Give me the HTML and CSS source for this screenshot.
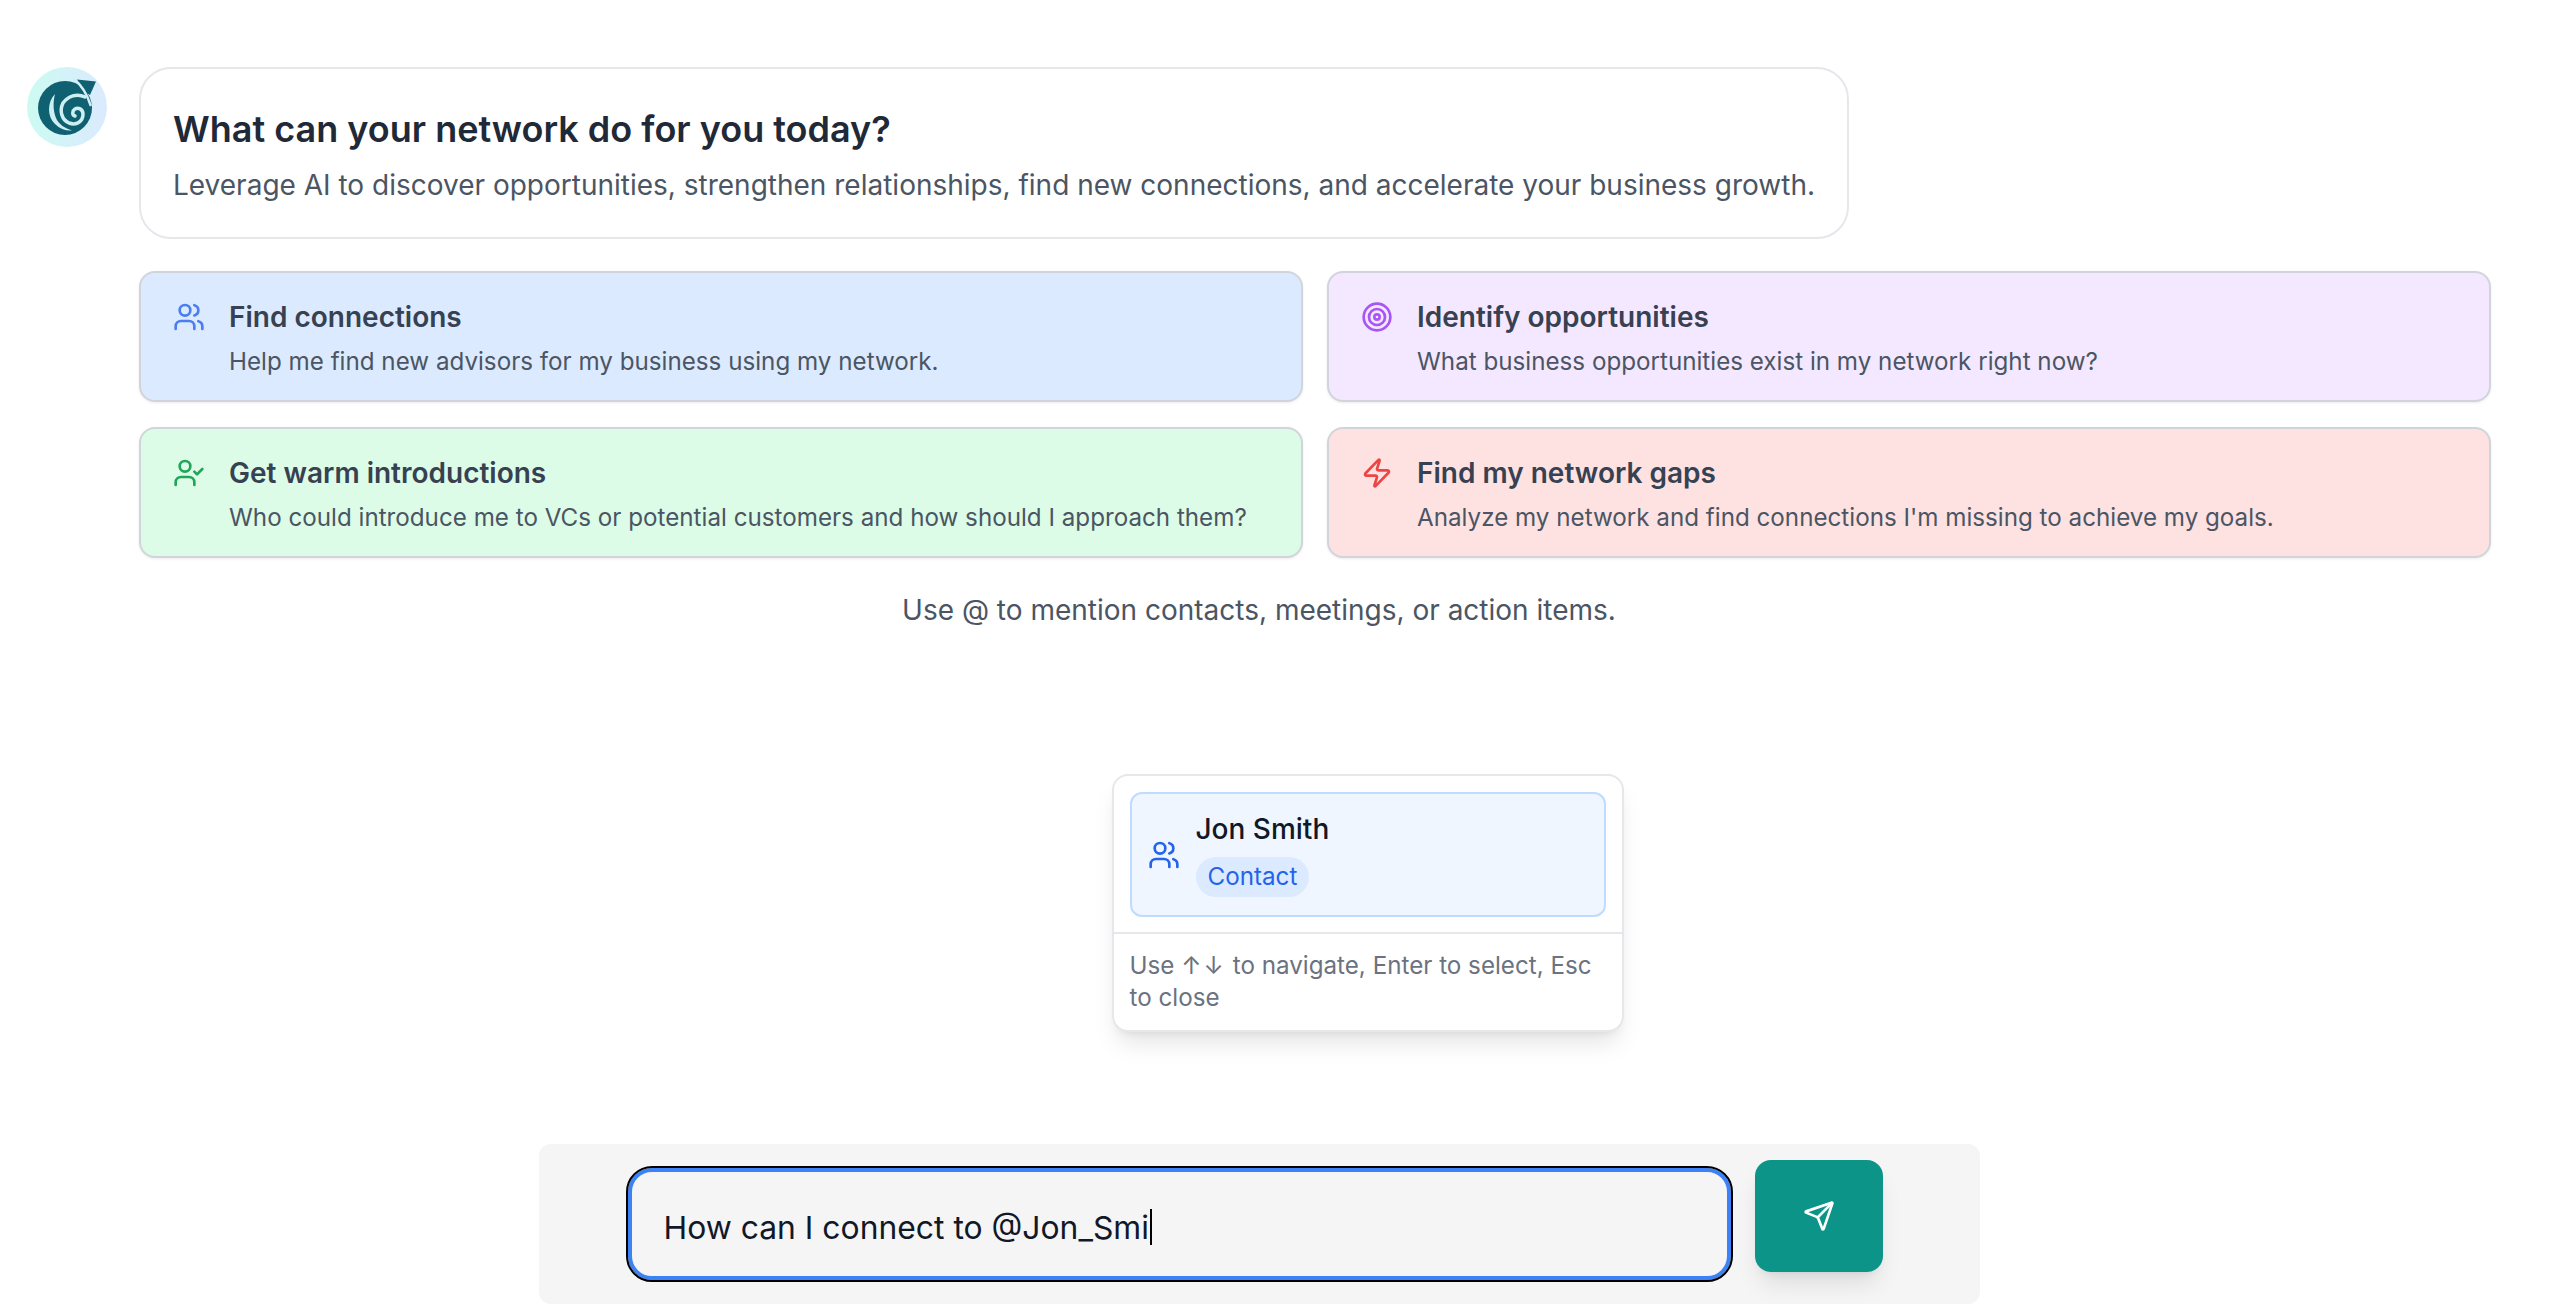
FILE: index.html
```html
<!DOCTYPE html>
<html lang="en">
<head>
<meta charset="utf-8">
<title>Network assistant</title>
<link rel="stylesheet" href="styles.css">
</head>
<body>
<div class="page">
  <section class="thread">
    <div class="avatar">
      <svg class="logo" viewBox="0 0 80 80">
        <circle class="logo-dark" cx="38" cy="41" r="27"/>
        <path class="logo-dark" d="M50 12.500 L69 14.500 L63 28 L56 24z"/>
        <path class="logo-line thin" d="M47 12 Q58 21 63.500 38"/>
        <path class="logo-fill" d="M28 27C20 35 20 50 28 57C33 62 39 64 45 63.500C38 61 32 58 29 51C26 43 26 35 28 27z"/>
        <path class="logo-line" d="M58 30C50 26 41 29 36 36C32 44 35 53 42 56C50 59 56 54 56 47C56 42 51 40 48 42C45 44 45 48 48 49"/>
      </svg>
    </div>
    <div class="content">
      <div class="bubble">
        <h1 class="bubble-title">What can your network do for you today?</h1>
        <p class="bubble-text">Leverage AI to discover opportunities, strengthen relationships, find new connections, and accelerate your business growth.</p>
      </div>
      <div class="cards">
        <div class="card card-blue">
          <svg class="icon icon-blue" viewBox="0 0 24 24"><path d="M16 21v-2a4 4 0 0 0-4-4H6a4 4 0 0 0-4 4v2"/><circle cx="9" cy="7" r="4"/><path d="M22 21v-2a4 4 0 0 0-3-3.870"/><path d="M16 3.130a4 4 0 0 1 0 7.750"/></svg>
          <div class="card-body">
            <div class="card-title">Find connections</div>
            <div class="card-text">Help me find new advisors for my business using my network.</div>
          </div>
        </div>
        <div class="card card-purple">
          <svg class="icon icon-purple" viewBox="0 0 24 24"><circle cx="12" cy="12" r="10"/><circle cx="12" cy="12" r="6"/><circle cx="12" cy="12" r="2"/></svg>
          <div class="card-body">
            <div class="card-title">Identify opportunities</div>
            <div class="card-text">What business opportunities exist in my network right now?</div>
          </div>
        </div>
        <div class="card card-green">
          <svg class="icon icon-green" viewBox="0 0 24 24"><path d="M16 21v-2a4 4 0 0 0-4-4H6a4 4 0 0 0-4 4v2"/><circle cx="9" cy="7" r="4"/><path d="M16 11l2 2 4-4"/></svg>
          <div class="card-body">
            <div class="card-title">Get warm introductions</div>
            <div class="card-text">Who could introduce me to VCs or potential customers and how should I approach them?</div>
          </div>
        </div>
        <div class="card card-red">
          <svg class="icon icon-red" viewBox="0 0 24 24"><path d="M4 14a1 1 0 0 1-.78-1.630l9.900-10.200a.5.5 0 0 1 .86.46l-1.920 6.020A1 1 0 0 0 13 10h7a1 1 0 0 1 .78 1.630l-9.900 10.200a.5.5 0 0 1-.86-.46l1.920-6.020A1 1 0 0 0 11 14z"/></svg>
          <div class="card-body">
            <div class="card-title">Find my network gaps</div>
            <div class="card-text">Analyze my network and find connections I'm missing to achieve my goals.</div>
          </div>
        </div>
      </div>
    </div>
  </section>
  <p class="hint">Use @ to mention contacts, meetings, or action items.</p>
  <div class="composer">
    <div class="menu">
      <div class="menu-item">
        <svg class="icon-small" viewBox="0 0 24 24"><path d="M16 21v-2a4 4 0 0 0-4-4H6a4 4 0 0 0-4 4v2"/><circle cx="9" cy="7" r="4"/><path d="M22 21v-2a4 4 0 0 0-3-3.870"/><path d="M16 3.130a4 4 0 0 1 0 7.750"/></svg>
        <div class="menu-body">
          <div class="menu-name">Jon Smith</div>
          <span class="menu-tag">Contact</span>
        </div>
      </div>
      <div class="menu-foot">Use ↑&#8202;↓&#8202; to navigate, Enter to select, Esc to close</div>
    </div>
    <div class="field"><span class="field-text">How can I connect to @Jon_Smi</span><span class="caret"></span></div>
    <button class="send" type="button">
      <svg class="send-icon" viewBox="0 0 24 24"><path d="M14.540 21.690a.5.5 0 0 0 .94-.03L21.980 2.670a.5.5 0 0 0-.64-.64L2.350 8.530a.5.5 0 0 0-.03.94l7.930 3.180a2 2 0 0 1 1.110 1.110z"/><path d="M21.850 2.150 10.900 13.100"/></svg>
    </button>
  </div>
</div>
</body>
</html>
```
FILE: styles.css
```css
* { box-sizing: border-box; }
html, body { margin: 0; padding: 0; background: #fff; }
body { font-family: Inter, "Liberation Sans", sans-serif; color: #1f2937; }
.page { height: 1312px; display: flex; flex-direction: column; align-items: center; padding: 67px 61px 8px 27px; overflow: hidden; }
.thread { width: 100%; display: flex; gap: 32px; align-items: flex-start; }
.avatar { flex: none; width: 80px; height: 80px; border-radius: 50%; background: linear-gradient(90deg, #ccfbf1, #dbeafe); }
.logo { display: block; width: 80px; height: 80px; }
.logo-dark { fill: #0f6070; }
.logo-fill { fill: #cdeff1; }
.logo-line { fill: none; stroke: #cdeff1; stroke-width: 3.500; stroke-linecap: round; }
.logo-line.thin { stroke-width: 2.500; stroke: #d6edf6; }
.content { flex: 1; min-width: 0; display: flex; flex-direction: column; gap: 32px; }
.bubble { align-self: flex-start; border: 2px solid #e5e7eb; border-radius: 32px; padding: 40px 32px 32px; background: #fff; }
.bubble-title { margin: 0 0 16px; font-size: 36px; line-height: 40px; font-weight: 600; color: #1f2937; }
.bubble-text { margin: 0; font-size: 28px; line-height: 40px; color: #4b5563; }
.cards { display: grid; grid-template-columns: 1fr 1fr; gap: 25px 24px; }
.card { height: 131px; display: flex; gap: 24px; padding: 24px 32px; border: 2px solid #d1d5db; border-radius: 16px; box-shadow: 0 1px 3px rgba(0,0,0,0.08); }
.card-blue { background: #dbeafe; }
.card-purple { background: #f3e8ff; }
.card-green { background: #dcfce7; }
.card-red { background: #fee2e2; }
.icon { flex: none; width: 32px; height: 32px; margin-top: 4px; fill: none; stroke-width: 2; stroke-linecap: round; stroke-linejoin: round; }
.icon-blue { stroke: #4a7df0; }
.icon-purple { stroke: #a855f7; }
.icon-green { stroke: #22a55a; }
.icon-red { stroke: #ef4444; }
.card-title { font-size: 28px; line-height: 40px; font-weight: 600; color: #374151; }
.card-text { margin-top: 7px; font-size: 24.200px; line-height: 36px; color: #4b5563; }
.hint { margin: 32px 0 0; font-size: 28px; line-height: 40px; color: #4b5563; text-align: center; }
.composer { position: relative; margin-top: auto; width: 1441px; height: 160px; background: #f5f5f5; border-radius: 12px; display: flex; align-items: flex-start; padding: 16px 97px 0 89px; gap: 24px; }
.field { flex: none; width: 1103px; height: 112px; margin-top: 8px; padding: 6px 32px 0; display: flex; align-items: center; border-radius: 24px; border: 4px solid #3b82f6; outline: 2px solid #000; font-size: 31.850px; color: #111827; }
.field-text { white-space: pre; }
.caret { width: 2px; height: 36px; background: #000; margin-left: 1px; }
.send { flex: none; width: 128px; height: 112px; border: 0; border-radius: 16px; background: #0d9488; display: flex; align-items: center; justify-content: center; box-shadow: 0 16px 24px -5px rgba(0,0,0,0.1), 0 6px 10px -6px rgba(0,0,0,0.1); }
.send-icon { width: 32px; height: 32px; fill: none; stroke: #fff; stroke-width: 2; stroke-linecap: round; stroke-linejoin: round; }
.menu { position: absolute; left: 573px; top: -370px; width: 512px; height: 258px; background: #fff; border: 2px solid #e5e7eb; border-radius: 16px; box-shadow: 0 16px 24px -5px rgba(0,0,0,0.1), 0 6px 10px -6px rgba(0,0,0,0.1); }
.menu-item { margin: 16px 16px 0; height: 125px; display: flex; align-items: center; gap: 16px; padding: 0 16px; background: #eff6ff; border: 2px solid #bfdbfe; border-radius: 12px; }
.icon-small { flex: none; width: 32px; height: 32px; fill: none; stroke: #2563eb; stroke-width: 2; stroke-linecap: round; stroke-linejoin: round; }
.menu-body { display: flex; flex-direction: column; align-items: flex-start; gap: 8px; padding-bottom: 3px; }
.menu-name { font-size: 28px; line-height: 40px; font-weight: 500; color: #111827; }
.menu-tag { font-size: 24.200px; line-height: 40px; padding: 0 12px; border-radius: 20px; background: #dbeafe; color: #2563eb; }
.menu-foot { margin-top: 15px; padding: 16px; border-top: 2px solid #e5e7eb; font-size: 24.200px; line-height: 32px; color: #6b7280; }
```
